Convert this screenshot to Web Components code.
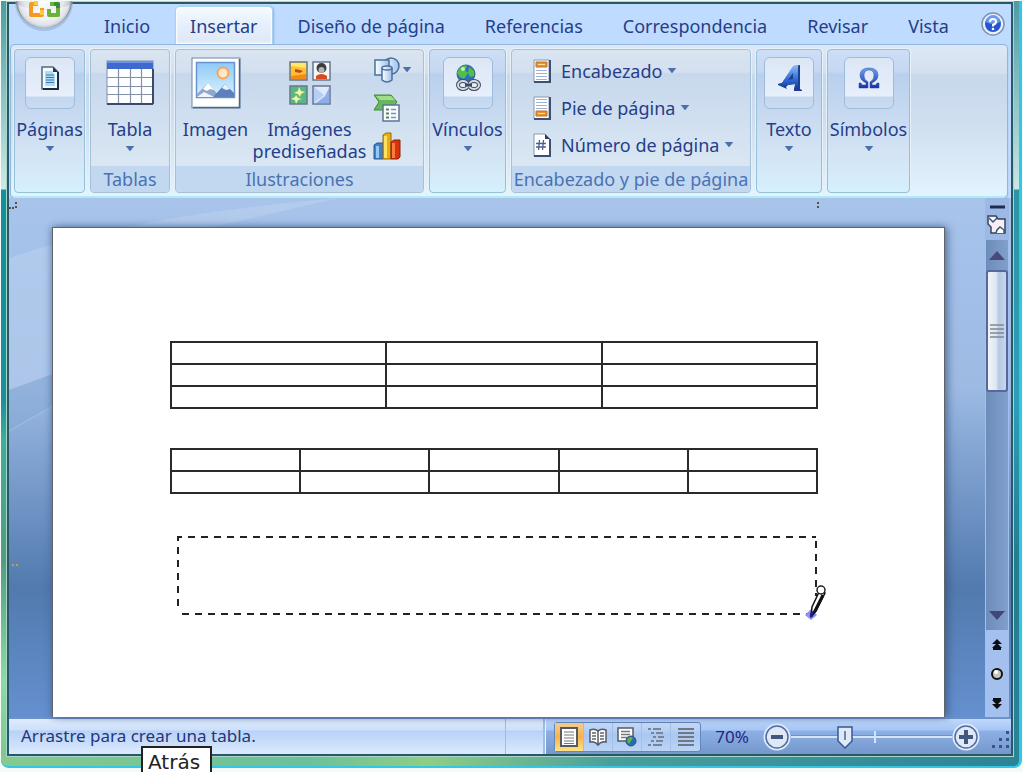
<!DOCTYPE html>
<html lang="es">
<head>
<meta charset="utf-8">
<title>Insertar tabla</title>
<style>
  html, body { height: 100%; }
  body {
    margin: 0;
    overflow: hidden;
    background: #f4faf8;
    font-family: "Noto Sans", "Open Sans", sans-serif;
    font-size: 18px;
    color: #253e89;
  }
</style>
</head>
<body>
<word-window>
  <office-orb slot="orb"></office-orb>
  <ribbon-tabs slot="tabs">
    <ribbon-tab>Inicio</ribbon-tab>
    <ribbon-tab active>Insertar</ribbon-tab>
    <ribbon-tab>Diseño de página</ribbon-tab>
    <ribbon-tab>Referencias</ribbon-tab>
    <ribbon-tab>Correspondencia</ribbon-tab>
    <ribbon-tab>Revisar</ribbon-tab>
    <ribbon-tab>Vista</ribbon-tab>
  </ribbon-tabs>

  <ribbon-panel slot="ribbon">
    <ribbon-group collapsed style="--w: 71px">
      <big-button boxed arrow icon="pages">Páginas</big-button>
    </ribbon-group>
    <ribbon-group label="Tablas" style="--w: 80px">
      <big-button arrow icon="table">Tabla</big-button>
    </ribbon-group>
    <ribbon-group label="Ilustraciones" style="--w: 249px">
      <big-button icon="picture" style="--w: 78px">Imagen</big-button>
      <big-button icon="clipart" style="--w: 110px">Imágenes prediseñadas</big-button>
      <icon-column></icon-column>
    </ribbon-group>
    <ribbon-group collapsed style="--w: 77px">
      <big-button boxed arrow icon="links">Vínculos</big-button>
    </ribbon-group>
    <ribbon-group label="Encabezado y pie de página" style="--w: 240px">
      <row-list>
        <row-button icon="header">Encabezado</row-button>
        <row-button icon="footer">Pie de página</row-button>
        <row-button icon="number">Número de página</row-button>
      </row-list>
    </ribbon-group>
    <ribbon-group collapsed style="--w: 66px">
      <big-button boxed arrow icon="wordart">Texto</big-button>
    </ribbon-group>
    <ribbon-group collapsed style="--w: 83px">
      <big-button boxed arrow icon="omega">Símbolos</big-button>
    </ribbon-group>
  </ribbon-panel>

  <doc-area slot="document">
    <doc-grid rows="3" cols="3"></doc-grid>
    <doc-grid rows="2" cols="5"></doc-grid>
    <draw-frame></draw-frame>
  </doc-area>

  <status-bar slot="status">Arrastre para crear una tabla.</status-bar>
  <hover-tip slot="tip">Atrás</hover-tip>
</word-window>

<script>
const ICONS = {
  pages: `<svg width="20" height="26" viewBox="0 0 20 26">
    <path d="M2 2h11l5 5v17H2z" fill="#f4fbff" stroke="#55677f" stroke-width="1.5"/>
    <path d="M18 7v17H3" fill="none" stroke="#1d2b40" stroke-width="2"/>
    <path d="M5 6h7l3 4v11H5z" fill="#a9dcf7"/>
    <path d="M13 2v5h5z" fill="#26354c"/>
    <path d="M6 10h8M6 12.500h8M6 15h8M6 17.500h8" stroke="#3e78ad" stroke-width="1.200"/>
  </svg>`,
  table: `<svg width="48" height="46" viewBox="0 0 48 46">
    <rect x="1" y="1" width="46" height="43" fill="#fdfeff" stroke="#7d8fa9"/>
    <rect x="1" y="1" width="46" height="8" fill="#3f69cf"/>
    <path d="M1 2h46" stroke="#6c92e4" stroke-width="2"/>
    <path d="M12.500 9v34M24.500 9v34M35.500 9v34M1 17.500h46M1 26.500h46M1 34.500h46" stroke="#8490a6" stroke-width="1.200"/>
    <path d="M1 44h46M47 9v35" stroke="#3d4a66" stroke-width="2"/>
  </svg>`,
  picture: `<svg width="50" height="52" viewBox="0 0 50 52">
    <defs><linearGradient id="sky" x2="0" y2="1"><stop stop-color="#8fcaf8"/><stop offset="1" stop-color="#d9f3fd"/></linearGradient></defs>
    <rect x="1" y="1" width="48" height="50" fill="#fff" stroke="#6d87a3"/>
    <path d="M48.500 2v48.500H2" fill="none" stroke="#4d6785" stroke-width="1.500"/>
    <rect x="5.500" y="5.500" width="38" height="35" fill="url(#sky)" stroke="#6a94cf" stroke-width="1.500"/>
    <circle cx="32" cy="16" r="5.500" fill="#ffe9c2" stroke="#f8a35f" stroke-width="2"/>
    <path d="M6 40V37L17 26l12 14z" fill="#8fa6cf"/><path d="M17 26l6 7-4-1-3 2-4-2z" fill="#fff"/>
    <path d="M22 40l12-13 9 9v4z" fill="#5c7fbd"/><path d="M34 27l5 5-4 1-4-2z" fill="#e8f2ff"/>
    <path d="M6 40l7-5 10 5z" fill="#eef5fd"/>
  </svg>`,
  clipart: `<svg width="44" height="46" viewBox="0 0 44 46">
    <g stroke="#66788f" stroke-width="1.500">
      <rect x="2" y="2" width="17" height="18" fill="#ffc22e"/>
      <rect x="25" y="2" width="17" height="18" fill="#f3f6fa"/>
      <rect x="2" y="26" width="17" height="18" fill="#58b884"/>
      <rect x="25" y="26" width="17" height="18" fill="#dfe9fd"/>
    </g>
    <path d="M3 3h15v5L3 6z" fill="#ffe96a"/><path d="M7 9l5 1 3 1-3 2-5-1z" fill="#c9461c"/><path d="M3 16l15-2v5H3z" fill="#f08a18"/>
    <circle cx="33.500" cy="8" r="5" fill="#3c3d42"/><circle cx="33.500" cy="10" r="3" fill="#b9b3b0"/>
    <path d="M28 19v-3q5-4 11 0v3z" fill="#d8491d"/>
    <path d="M11 27l2 4 4 1-4 2-1 3-2-3-4-1 4-2z" fill="#f6f39b"/><path d="M8 35l2 3 4 1-4 1-2 4-1-4-4-1 4-2z" fill="#fbf4a5"/>
    <path d="M26 27l10 8-10 8z" fill="#b5cdf7"/><path d="M41 28v15H28l9-7z" fill="#8fafea"/>
  </svg>`,
  links: `<svg width="28" height="30" viewBox="0 0 28 30">
    <circle cx="12" cy="11" r="9" fill="#2d6fc4" stroke="#47627f"/>
    <path d="M5 6q4-5 8-3l-2 4 3 3-4 6-4-2-3-4zM15 4l5 4v5l-4 1-2-4z" fill="#4fc04a"/>
    <circle cx="9" cy="6" r="2" fill="#c4f0b4"/>
    <g fill="none" stroke="#3f4a5e" stroke-width="4"><ellipse cx="9" cy="22" rx="5" ry="4"/><ellipse cx="20" cy="22" rx="5" ry="4"/></g>
    <g fill="none" stroke="#d5dce6" stroke-width="2"><ellipse cx="9" cy="22" rx="5" ry="4"/><ellipse cx="20" cy="22" rx="5" ry="4"/></g>
    <path d="M11 22h7" stroke="#3f4a5e" stroke-width="3"/>
  </svg>`,
  wordart: `<svg width="28" height="28" viewBox="0 0 28 28">
    <defs><linearGradient id="wa" x2="0" y2="1"><stop stop-color="#8fbdf5"/><stop offset=".6" stop-color="#2f6bd8"/><stop offset="1" stop-color="#15399a"/></linearGradient></defs>
    <path d="M19 2l6-1v24l2 1v1h-8v-2l1-1v-4l-7 1-2 2 1 2-9-4v-1l4-1z" fill="#1d3f8f"/>
    <path d="M18 2l5-1v23l1 1h-5l1-5-8 1-2 1-7-2 4-1zM18 9l-5 7 5-1z" fill="url(#wa)" fill-rule="evenodd"/>
  </svg>`,
  omega: `<svg width="24" height="24" viewBox="0 0 24 24">
    <defs><linearGradient id="om" x2="0" y2="1"><stop stop-color="#6aa5f0"/><stop offset="1" stop-color="#1c2fa6"/></linearGradient></defs>
    <path d="M2 22v-5h2l1 2h4v-2Q3 14 3 9.500 3 2 12 2t9 7.500Q21 14 15 17v2h4l1-2h2v5h-9v-6q4-2 4-6.500Q17 4 12 4T7 9.500Q7 14 11 16v6z" fill="url(#om)" stroke="#2744b0" stroke-width=".5"/>
  </svg>`,
  header: `<svg width="20" height="26" viewBox="0 0 20 26">
    <path d="M2 2h15v22H2z" fill="#fff" stroke="#8897ae"/><path d="M18 2v22H2" fill="none" stroke="#3a5075" stroke-width="2"/>
    <path d="M4 4h11v5H4z" fill="#e9912d" stroke="#c4731d"/><path d="M6 6.500h7" stroke="#ffdca0"/>
    <path d="M4 12.500h11M4 15.500h11M4 18.500h11M4 21.500h11" stroke="#9db2d6"/>
  </svg>`,
  footer: `<svg width="20" height="26" viewBox="0 0 20 26">
    <path d="M2 2h15v22H2z" fill="#fff" stroke="#8897ae"/><path d="M18 2v22H2" fill="none" stroke="#3a5075" stroke-width="2"/>
    <path d="M4 4.500h11M4 7.500h11M4 10.500h11M4 13.500h11" stroke="#9db2d6"/>
    <path d="M4 16h11v5H4z" fill="#e9912d" stroke="#c4731d"/><path d="M6 18.500h7" stroke="#ffdca0"/>
  </svg>`,
  number: `<svg width="20" height="26" viewBox="0 0 20 26">
    <path d="M2 2h11l5 5v17H2z" fill="#fff" stroke="#8897ae"/><path d="M18 7v17H2" fill="none" stroke="#3a5075" stroke-width="2"/>
    <path d="M13 2v5h5z" fill="#27406a"/>
    <path d="M7.500 8l-1 10M11.500 8l-1 10M4 11.500h10M4 15h10" stroke="#4a5f8d" stroke-width="1.300" fill="none"/>
  </svg>`,
  shapes: `<svg width="28" height="28" viewBox="0 0 28 28">
    <defs><linearGradient id="sh"><stop stop-color="#fff"/><stop offset="1" stop-color="#9fc0e8"/></linearGradient></defs>
    <g fill="url(#sh)" stroke="#47719f" stroke-width="1.500"><circle cx="18" cy="10" r="8"/><rect x="2" y="4" width="14" height="15"/>
    <path d="M9 12v12q5 4 10 0V12"/><ellipse cx="14" cy="12" rx="5" ry="2"/></g>
  </svg>`,
  smart: `<svg width="28" height="28" viewBox="0 0 28 28">
    <path d="M1 1h17l6 7-6 8H1l5-8z" fill="#66b858" stroke="#3f8a3b"/><path d="M3 2h15l4 4H7z" fill="#a2db8b"/>
    <path d="M10 11h16v16H10z" fill="#f7faff" stroke="#5d7392" stroke-width="1.500"/>
    <path d="M13 15.500h3M13 19.500h3M13 23.500h3" stroke="#4f8a56" stroke-width="2"/><path d="M18 15.500h5M18 19.500h5M18 23.500h5" stroke="#7a93c4" stroke-width="1.500"/>
  </svg>`,
  chart: `<svg width="28" height="28" viewBox="0 0 28 28">
    <path d="M1 13l3-2h6v16H1z" fill="#3c82cf" stroke="#245a9a"/><path d="M3 14h3v12H3z" fill="#96c8f3"/>
    <path d="M10 3l3-2h5v26h-8z" fill="#e9ae11" stroke="#9a6b0a"/><path d="M11 4h3v22h-3z" fill="#ffe160"/>
    <path d="M18 10l3-2h6v17l-2 2h-7z" fill="#d8330f" stroke="#8f1f0b"/><path d="M19 11h3v15h-3z" fill="#ff7a3f"/>
  </svg>`
};

const ARROW = '<svg class="arrow" width="10" height="6" viewBox="0 0 10 6"><path d="M1 0h8L5 5z" fill="#4870ac" stroke="#4870ac" stroke-width=".5"/></svg>';

const BUTTON_RESET = `
  button { margin: 0; padding: 0; border: 0; background: none; font: inherit; color: inherit; cursor: pointer; }
  svg { display: block; flex: none; }
`;

class WordWindow extends HTMLElement {
  constructor() {
    super();
    this.attachShadow({mode: 'open'});
    this.shadowRoot.innerHTML = `
      <style>
        :host {
          display: flex;
          position: relative;
          box-sizing: border-box;
          height: 100vh;
          padding: 1px 1px 4px 1px;
        }
        .glass {
          flex: 1;
          display: flex;
          min-width: 0;
          box-sizing: border-box;
          padding: 1px 6px 10px 6px;
          border-right: 3px solid #35c6e4;
          border-bottom: 2px solid #35c6e4;
          border-radius: 0 0 8px 8px;
          background:
            linear-gradient(90deg, #86ca8c, #6cc09a 30%, #8fce84 42%, #4a9f9c 60%, #2b8398) bottom / 100% 10px no-repeat,
            linear-gradient(#4d9d9f, #9ccdcd 120px, #cfe9e6 188px, #12909b 189px, #1c8f9c 400px, #3fae98 440px, #559b82 560px, #8cdba2 680px, #7fc48a) left / 8px 100% no-repeat,
            linear-gradient(#4f9aa6, #8fc4c8 100px, #cbe5e4 188px, #2e94a4 189px, #2b9fb8 400px, #237c93 560px, #2b8398);
        }
        .frame {
          flex: 1;
          display: flex;
          flex-direction: column;
          min-width: 0;
          border: 2px solid #275a63;
          background: #bfdbff;
          overflow: hidden;
          box-shadow: 0 0 0 1px #a9d5cf;
        }
        ::slotted([slot=document]) { flex: 1; min-height: 0; }
      </style>
      <div class="glass"><div class="frame">
        <slot name="tabs"></slot>
        <slot name="ribbon"></slot>
        <slot name="document"></slot>
        <slot name="status"></slot>
      </div></div>
      <slot name="orb"></slot>
      <slot name="tip"></slot>
    `;
  }
}

class OfficeOrb extends HTMLElement {
  constructor() {
    super();
    this.attachShadow({mode: 'open'});
    this.shadowRoot.innerHTML = `
      <style>
        ${BUTTON_RESET}
        :host { position: absolute; left: 14px; top: 1px; }
      </style>
      <button aria-label="Botón de Office">
        <svg width="60" height="32" viewBox="0 0 60 32">
          <defs><radialGradient id="orb" cx=".5" cy=".5" r=".5"><stop stop-color="#fff"/><stop offset=".7" stop-color="#e3e7ec"/><stop offset=".9" stop-color="#c4cad3"/><stop offset="1" stop-color="#7d8794"/></radialGradient></defs>
          <circle cx="30" cy="1" r="29" fill="#8ba4c6" opacity=".5"/>
          <circle cx="30" cy="-1" r="28" fill="url(#orb)"/>
          <path d="M4 4q26 10 52 0-4 21-26 23Q8 25 4 4z" fill="#fff" opacity=".45"/>
          <g fill="none" stroke-width="4" stroke-linejoin="round">
            <path d="M24 3h-7v11h11V7" stroke="#f59a22"/>
            <path d="M20 2h4M28 14v-5" stroke="#ffcb3a"/>
            <path d="M36 3h8v11h-9V8" stroke="#6cb13a"/>
            <path d="M40 3h4v4" stroke="#3c8b37"/>
          </g>
        </svg>
      </button>
    `;
  }
}

class RibbonTabs extends HTMLElement {
  constructor() {
    super();
    this.attachShadow({mode: 'open'});
    this.shadowRoot.innerHTML = `
      <style>
        ${BUTTON_RESET}
        :host {
          display: flex;
          align-items: flex-end;
          height: 40px;
          padding-left: 75px;
          background: #bfdbff;
        }
        .help { margin: 0 5px 7px auto; }
      </style>
      <slot></slot>
      <button class="help" aria-label="Ayuda">
        <svg width="26" height="26" viewBox="0 0 26 26">
          <circle cx="13" cy="13" r="11" fill="#e9f1fc" stroke="#7f93b5" stroke-width="1.500"/>
          <circle cx="13" cy="13" r="8" fill="#2456cf"/><path d="M6 11a7 7 0 0 1 14 0q-7 4-14 0z" fill="#6b9af0"/>
          <path d="M10 11q0-3 3-3t3 2.500-3 3.500v1.500" fill="none" stroke="#fff" stroke-width="2"/>
          <circle cx="13" cy="18" r="1.300" fill="#fff"/>
        </svg>
      </button>
    `;
  }
}

class RibbonTab extends HTMLElement {
  constructor() {
    super();
    this.attachShadow({mode: 'open'});
    this.shadowRoot.innerHTML = `
      <style>
        ${BUTTON_RESET}
        :host { display: block; height: 38px; }
        button {
          height: 38px;
          padding: 0 20px;
          line-height: 40px;
          white-space: nowrap;
        }
        :host([active]) { margin: 0 5px; }
        :host([active]) button {
          padding: 0 14px;
          border: 1px solid #a9d2ee;
          border-bottom: 0;
          border-radius: 5px 5px 0 0;
          line-height: 39px;
          background: linear-gradient(#f5fbff, #e4effb 50%, #dfe9f6);
          box-shadow: 1px 0 2px #8db2dc, inset 0 0 2px 1px #fff;
        }
      </style>
      <button><slot></slot></button>
    `;
  }
}

class RibbonPanel extends HTMLElement {
  constructor() {
    super();
    this.attachShadow({mode: 'open'});
    this.shadowRoot.innerHTML = `
      <style>
        :host {
          display: flex;
          gap: 5px;
          box-sizing: border-box;
          height: 154px;
          margin: 0 3px 0 1px;
          padding: 4px 3px 3px;
          border: 1px solid #8fb6df;
          border-bottom: 2px solid #b4e8f4;
          border-radius: 5px;
          background: linear-gradient(#dee8f5, #d4e0ef 28px, #c7d8ed 30px, #d0dfef 80px, #e2f4fe);
          box-shadow: 0 1px 1px #7f9dc4;
        }
      </style>
      <slot></slot>
    `;
  }
}

class RibbonGroup extends HTMLElement {
  connectedCallback() {
    this.attachShadow({mode: 'open'});
    const label = this.getAttribute('label');
    this.shadowRoot.innerHTML = `
      <style>
        :host {
          display: flex;
          flex-direction: column;
          box-sizing: border-box;
          flex: none;
          width: var(--w);
          border: 1px solid #a5c1da;
          border-radius: 4px;
          background: linear-gradient(#dae4f1, #d4e0ef 22px, #c7d8ed 24px, #dae7f3 116px);
          box-shadow: 0 0 0 1px #e6f1fa;
          overflow: hidden;
        }
        :host([collapsed]) {
          border-color: #97bfd8;
          background: linear-gradient(#cddef6, #c5d7f2 22px, #b9cfed 24px, #d3e3f4 100px, #d6f0fd);
        }
        .body { display: flex; flex: 1; min-height: 0; justify-content: center; }
        .label {
          height: 26px;
          line-height: 26px;
          text-align: center;
          white-space: nowrap;
          color: #4a72b3;
          background: #c1d8f0;
        }
      </style>
      <div class="body"><slot></slot></div>
      ${label ? `<div class="label">${label}</div>` : ''}
    `;
  }
}

class BigButton extends HTMLElement {
  connectedCallback() {
    this.attachShadow({mode: 'open'});
    this.shadowRoot.innerHTML = `
      <style>
        ${BUTTON_RESET}
        :host { display: block; width: var(--w, 100%); }
        button {
          display: flex;
          flex-direction: column;
          align-items: center;
          width: 100%;
          padding-top: 7px;
        }
        .icon { display: flex; align-items: center; justify-content: center; height: 52px; }
        :host([boxed]) .icon {
          box-sizing: border-box;
          width: 50px;
          padding-bottom: 10px;
          border: 1px solid #9fbdd9;
          border-radius: 6px;
          background: linear-gradient(#dce7f6, #e6effb 38px, #c3d7ef 39px, #c9dcf2);
        }
        .text { margin-top: 9px; line-height: 22px; }
        .arrow { margin-top: 6px; }
      </style>
      <button>
        <span class="icon">${ICONS[this.getAttribute('icon')]}</span>
        <span class="text"><slot></slot></span>
        ${this.hasAttribute('arrow') ? ARROW : ''}
      </button>
    `;
  }
}

class IconColumn extends HTMLElement {
  constructor() {
    super();
    this.attachShadow({mode: 'open'});
    this.shadowRoot.innerHTML = `
      <style>
        ${BUTTON_RESET}
        :host { display: flex; flex-direction: column; gap: 10px; width: 50px; padding: 6px 0 0 8px; }
        button { display: flex; align-items: center; gap: 1px; }
      </style>
      <button aria-label="Formas">${ICONS.shapes}${ARROW}</button>
      <button aria-label="SmartArt">${ICONS.smart}</button>
      <button aria-label="Gráfico">${ICONS.chart}</button>
    `;
  }
}

class RowList extends HTMLElement {
  constructor() {
    super();
    this.attachShadow({mode: 'open'});
    this.shadowRoot.innerHTML = `
      <style>
        :host { display: flex; flex: 1; flex-direction: column; padding: 2px 0 0 20px; }
      </style>
      <slot></slot>
    `;
  }
}

class RowButton extends HTMLElement {
  connectedCallback() {
    this.attachShadow({mode: 'open'});
    this.shadowRoot.innerHTML = `
      <style>
        ${BUTTON_RESET}
        :host { display: block; }
        button { display: flex; align-items: center; height: 37px; white-space: nowrap; }
        .text { margin: 0 5px 0 9px; }
      </style>
      <button>${ICONS[this.getAttribute('icon')]}<span class="text"><slot></slot></span>${ARROW}</button>
    `;
  }
}

class DocArea extends HTMLElement {
  constructor() {
    super();
    this.attachShadow({mode: 'open'});
    this.shadowRoot.innerHTML = `
      <style>
        :host {
          display: flex;
          position: relative;
          background: linear-gradient(#a9c4ea, #a3c1ea 60px, #9dbae3 190px, #84a6d4 250px, #527aae 390px, #6590cf);
        }
        .back { position: absolute; left: 0; top: 0; width: 100%; height: 100%; }
        .sheet-area {
          flex: 1;
          display: flex;
          flex-direction: column;
          min-width: 0;
          position: relative;
          padding: 0 40px 0 43px;
        }
        .marks { width: calc(100% + 43px); height: 29px; margin: 0 0 0 -43px; }
        .page {
          flex: 1;
          display: flex;
          flex-direction: column;
          padding: 113px 126px 0 117px;
          border: 1px solid #5f6468;
          border-bottom: 0;
          background: #fff;
          box-shadow: 3px 0 8px #2f4b7599, -2px 0 6px #4a6a9a66;
        }
      </style>
      <svg class="back" aria-hidden="true">
        <path d="M0 0H330Q120 18 0 60V192L44 176V30H200L330 0z" fill="#c2d8f0" opacity=".4"/>
        <path d="M0 192L44 176V208L0 233z" fill="#86a9d4" opacity=".5"/>
        <path d="M0 233L44 208" stroke="#b4cdec" opacity=".6"/>
        <path d="M3 367h2M7 367h2" stroke="#c69a4a" stroke-width="2"/>
      </svg>
      <div class="sheet-area">
        <svg class="marks" aria-hidden="true">
          <path d="M0 10h2M3 10h2M6 5h2M6 9h2" stroke="#56504a" stroke-width="2"/>
          <svg x="100%" overflow="visible"><path d="M-128 5h2M-128 9h2" stroke="#56504a" stroke-width="2"/></svg>
        </svg>
        <div class="page"><slot></slot></div>
      </div>
      <page-scrollbar></page-scrollbar>
    `;
  }
}

class DocGrid extends HTMLElement {
  connectedCallback() {
    this.attachShadow({mode: 'open'});
    const cells = '<td></td>'.repeat(this.getAttribute('cols'));
    const rows = `<tr>${cells}</tr>`.repeat(this.getAttribute('rows'));
    this.shadowRoot.innerHTML = `
      <style>
        :host { display: block; margin-bottom: 39px; }
        table { width: 100%; table-layout: fixed; border-collapse: collapse; }
        td { box-sizing: border-box; height: 22px; padding: 0; border: 2px solid #2a2a2a; }
      </style>
      <table>${rows}</table>
    `;
  }
}

class DrawFrame extends HTMLElement {
  constructor() {
    super();
    this.attachShadow({mode: 'open'});
    this.shadowRoot.innerHTML = `
      <style>
        :host { display: block; position: relative; margin: 3px 2px 0 7px; height: 79px; }
        .dash { display: block; width: 100%; height: 100%; overflow: visible; }
        .pencil { position: absolute; right: -11px; bottom: -5px; }
      </style>
      <svg class="dash" aria-hidden="true">
        <g stroke="#222" stroke-width="2" stroke-dasharray="7 6">
          <line x1="0" y1="1" x2="100%" y2="1" stroke-dashoffset="2"/>
          <line x1="5" y1="78" x2="100%" y2="78"/>
          <line x1="1" y1="0" x2="1" y2="76" stroke-dashoffset="2"/>
          <line x1="100%" y1="5" x2="100%" y2="60"/>
        </g>
      </svg>
      <svg class="pencil" width="22" height="36" viewBox="0 0 22 36">
        <path d="M6 25l6 6-6 5-6-5z" fill="#8f8ff8"/>
        <path d="M6 32l1-9 8-17 5 3-9 18z" fill="#fff" stroke="#111" stroke-width="1.500"/>
        <path d="M18 11l-8 16-4 5" fill="none" stroke="#111" stroke-width="3"/>
        <circle cx="16" cy="6" r="4" fill="#fff" stroke="#222" stroke-width="1.500"/>
        <path d="M5 30l2-3 2 3-3 4z" fill="#1d1d8f"/>
      </svg>
    `;
  }
}

class PageScrollbar extends HTMLElement {
  constructor() {
    super();
    this.attachShadow({mode: 'open'});
    this.shadowRoot.innerHTML = `
      <style>
        ${BUTTON_RESET}
        :host {
          display: flex;
          flex-direction: column;
          position: relative;
          width: 24px;
          margin-right: 2px;
          background: #a3c0ee;
        }
        .top { height: 42px; background: #9cb9e6; }
        .top svg, button svg { margin: 0 auto; }
        .track {
          flex: 1;
          display: flex;
          flex-direction: column;
          margin: 0 1px;
          background: linear-gradient(90deg, #6c8cba, #819fcb);
        }
        .track button { height: 30px; }
        .thumb {
          display: flex;
          align-items: center;
          box-sizing: border-box;
          height: 122px;
          border: 2px solid #56699a;
          border-radius: 3px;
          background: linear-gradient(90deg, #f1f5fa, #dde6f1 45%, #b5c8e3 60%, #c9d8ec);
        }
        .track .last { margin-top: auto; }
        .nav { display: flex; flex-direction: column; justify-content: space-around; height: 87px; }
        .nav button { height: 28px; }
      </style>
      <div class="top">
        <svg width="22" height="42" viewBox="0 0 22 42">
          <path d="M4 9h15" stroke="#1f2c4d" stroke-width="3"/>
          <path d="M2 18h8l2 3h7v14H5v-6l-3-3z" fill="#f6eef6" stroke="#394560" stroke-width="1.500"/>
          <path d="M3 20l4 4 4-4M10 35l1-3 3-3 4 3v3" fill="#fff" stroke="#39576b" stroke-width="1.500"/>
        </svg>
      </div>
      <div class="track">
        <button aria-label="Arriba"><svg width="16" height="9" viewBox="0 0 16 9"><path d="M8 0l8 9H0z" fill="#484b78"/></svg></button>
        <div class="thumb"><svg width="14" height="14" viewBox="0 0 14 14" style="margin: 0 auto"><path d="M0 1h14M0 5h14M0 9h14M0 13h14" stroke="#808894" stroke-width="1.500"/></svg></div>
        <button class="last" aria-label="Abajo"><svg width="16" height="9" viewBox="0 0 16 9"><path d="M8 9l8-9H0z" fill="#404778"/></svg></button>
      </div>
      <div class="nav">
        <button aria-label="Página anterior"><svg width="10" height="12" viewBox="0 0 10 12"><path d="M5 0l5 5H0zM5 4l5 5H0zM1 9h8v2H1z" fill="#0c0e16"/></svg></button>
        <button aria-label="Seleccionar objeto"><svg width="14" height="14" viewBox="0 0 14 14"><circle cx="7" cy="7" r="5" fill="#c9c6be" stroke="#111" stroke-width="2"/><circle cx="6" cy="5" r="2" fill="#fff"/></svg></button>
        <button aria-label="Página siguiente"><svg width="10" height="12" viewBox="0 0 10 12"><path d="M5 12l5-5H0zM5 8l5-5H0zM1 1h8v2H1z" fill="#0c0e16"/></svg></button>
      </div>
    `;
  }
}

class StatusBar extends HTMLElement {
  constructor() {
    super();
    this.attachShadow({mode: 'open'});
    this.shadowRoot.innerHTML = `
      <style>
        ${BUTTON_RESET}
        :host {
          display: flex;
          box-sizing: border-box;
          height: 37px;
          border-top: 2px solid #6d92c9;
          background: linear-gradient(#e0ecfd, #cde0fb 11px, #b8d2f6 12px, #dbe9fd);
          color: #22357f;
          font-size: 17px;
        }
        .message { flex: 1; padding-left: 12px; line-height: 34px; white-space: nowrap; }
        .gap { width: 37px; border: solid #9dbde6; border-width: 0 2px 0 1px; }
        .right {
          display: flex;
          align-items: center;
          box-sizing: border-box;
          width: 466px;
          padding-left: 8px;
          border-left: 1px solid #f0f6ff;
          background: linear-gradient(#c0d8fb, #a6c6f5 11px, #8cb0e6 12px, #7597cb);
        }
        .views {
          display: flex;
          border: 1px solid #6386bd;
          border-radius: 3px;
          background: linear-gradient(#c9dcf8, #a9c7f2 12px, #bdd5f5);
        }
        .views button {
          display: flex;
          align-items: center;
          justify-content: center;
          width: 29px;
          height: 28px;
          border-right: 1px solid #a4bfe4;
        }
        .views button:last-child { border-right: 0; }
        .views .on { background: linear-gradient(#f6cf92, #f9b14b 14px, #fee383); }
        .percent { width: 62px; text-align: center; color: #1f2a80; }
        input {
          appearance: none;
          flex: 1;
          min-width: 0;
          height: 28px;
          margin: 0;
          background:
            linear-gradient(#d5e3f7, #d5e3f7) 52% 50% / 2px 12px no-repeat,
            linear-gradient(#7290c0 1px, #d5e3f7 1px) center / 100% 3px no-repeat;
        }
        input::-webkit-slider-thumb {
          appearance: none;
          width: 16px;
          height: 24px;
          background: url("data:image/svg+xml,%3Csvg xmlns='http://www.w3.org/2000/svg' viewBox='0 0 16 24'%3E%3Cpath d='M1 2h14v14l-7 7-7-7z' fill='%23dfe9f7' stroke='%23385a94' stroke-width='1.500'/%3E%3Cpath d='M8 6v9' stroke='%236d87b4' stroke-width='2'/%3E%3C/svg%3E") no-repeat;
        }
        .grip { align-self: flex-end; margin: 0 0 4px 3px; }
      </style>
      <div class="message"><slot></slot></div>
      <div class="gap"></div>
      <div class="right">
        <div class="views">
          <button class="on" aria-label="Diseño de impresión"><svg width="20" height="22" viewBox="0 0 20 22"><rect x="2" y="2" width="16" height="18" fill="#fff" stroke="#555b66" stroke-width="2"/><path d="M5 6h10M5 9h10M5 12h10M5 15h10M5 17.500h10" stroke="#777" /></svg></button>
          <button aria-label="Lectura"><svg width="20" height="20" viewBox="0 0 20 20"><path d="M2 3q5-2 8 1 3-3 8-1v12q-5-1-8 3-3-4-8-3z" fill="#fff" stroke="#555b66" stroke-width="1.500"/><path d="M10 4v13" stroke="#555b66" stroke-width="1.500"/><path d="M4 6h4M4 9h4M4 12h4M12 6h4M12 9h4M12 12h4" stroke="#666" stroke-width="1.500"/></svg></button>
          <button aria-label="Diseño web"><svg width="22" height="22" viewBox="0 0 22 22"><rect x="2" y="2" width="15" height="13" fill="#fff" stroke="#555b66" stroke-width="1.500"/><path d="M5 5.500h9M5 8.500h9M5 11.500h7" stroke="#777" stroke-width="1.500"/><circle cx="15" cy="15" r="5" fill="#2b69b5" stroke="#31507a"/><path d="M12 12q3-2 5 0l-2 3-2 3-2-3z" fill="#59b553"/></svg></button>
          <button aria-label="Esquema"><svg width="20" height="20" viewBox="0 0 20 20"><path d="M2 2h3M7 2h8M5 6h3M10 6h7M7 10h3M12 10h6M5 14h3M10 14h7M2 18h3M7 18h9" stroke="#7a8494" stroke-width="2"/></svg></button>
          <button aria-label="Borrador"><svg width="18" height="20" viewBox="0 0 18 20"><path d="M1 2h16M1 6h16M1 10h16M1 14h16M1 18h16" stroke="#6f7885" stroke-width="2"/></svg></button>
        </div>
        <span class="percent">70%</span>
        <button aria-label="Alejar"><svg width="28" height="28" viewBox="0 0 28 28"><circle cx="14" cy="14" r="12" fill="#e2ebf7" stroke="#dfebfb" stroke-width="3"/><circle cx="14" cy="14" r="11" fill="#dfe8f4" stroke="#4c6ea5" stroke-width="1.500"/><path d="M8 14h12" stroke="#41587e" stroke-width="4"/></svg></button>
        <input type="range" min="0" max="100" value="32" aria-label="Zoom">
        <button aria-label="Acercar"><svg width="28" height="28" viewBox="0 0 28 28"><circle cx="14" cy="14" r="12" fill="#e2ebf7" stroke="#dfebfb" stroke-width="3"/><circle cx="14" cy="14" r="11" fill="#dfe8f4" stroke="#4c6ea5" stroke-width="1.500"/><path d="M7 14h14M14 7v14" stroke="#41587e" stroke-width="4"/></svg></button>
        <svg class="grip" width="28" height="20" viewBox="0 0 28 20"><g fill="#385488"><path d="M23 1h3v3h-3zM16 8h3v3h-3zM23 8h3v3h-3zM9 15h3v3H9zM16 15h3v3h-3zM23 15h3v3h-3z"/></g></svg>
      </div>
    `;
  }
}

class HoverTip extends HTMLElement {
  constructor() {
    super();
    this.attachShadow({mode: 'open'});
    this.shadowRoot.innerHTML = `
      <style>
        :host {
          position: absolute;
          left: 141px;
          bottom: 0;
          box-sizing: border-box;
          height: 26px;
          padding: 0 10px 0 5px;
          border: 2px solid #222;
          border-bottom: 0;
          background: #fff;
          color: #222;
          font-family: "DejaVu Sans", sans-serif;
          font-size: 20px;
          line-height: 28px;
        }
      </style>
      <slot></slot>
    `;
  }
}

customElements.define('word-window', WordWindow);
customElements.define('office-orb', OfficeOrb);
customElements.define('ribbon-tabs', RibbonTabs);
customElements.define('ribbon-tab', RibbonTab);
customElements.define('ribbon-panel', RibbonPanel);
customElements.define('ribbon-group', RibbonGroup);
customElements.define('big-button', BigButton);
customElements.define('icon-column', IconColumn);
customElements.define('row-list', RowList);
customElements.define('row-button', RowButton);
customElements.define('page-scrollbar', PageScrollbar);
customElements.define('doc-area', DocArea);
customElements.define('doc-grid', DocGrid);
customElements.define('draw-frame', DrawFrame);
customElements.define('status-bar', StatusBar);
customElements.define('hover-tip', HoverTip);
</script>
</body>
</html>
